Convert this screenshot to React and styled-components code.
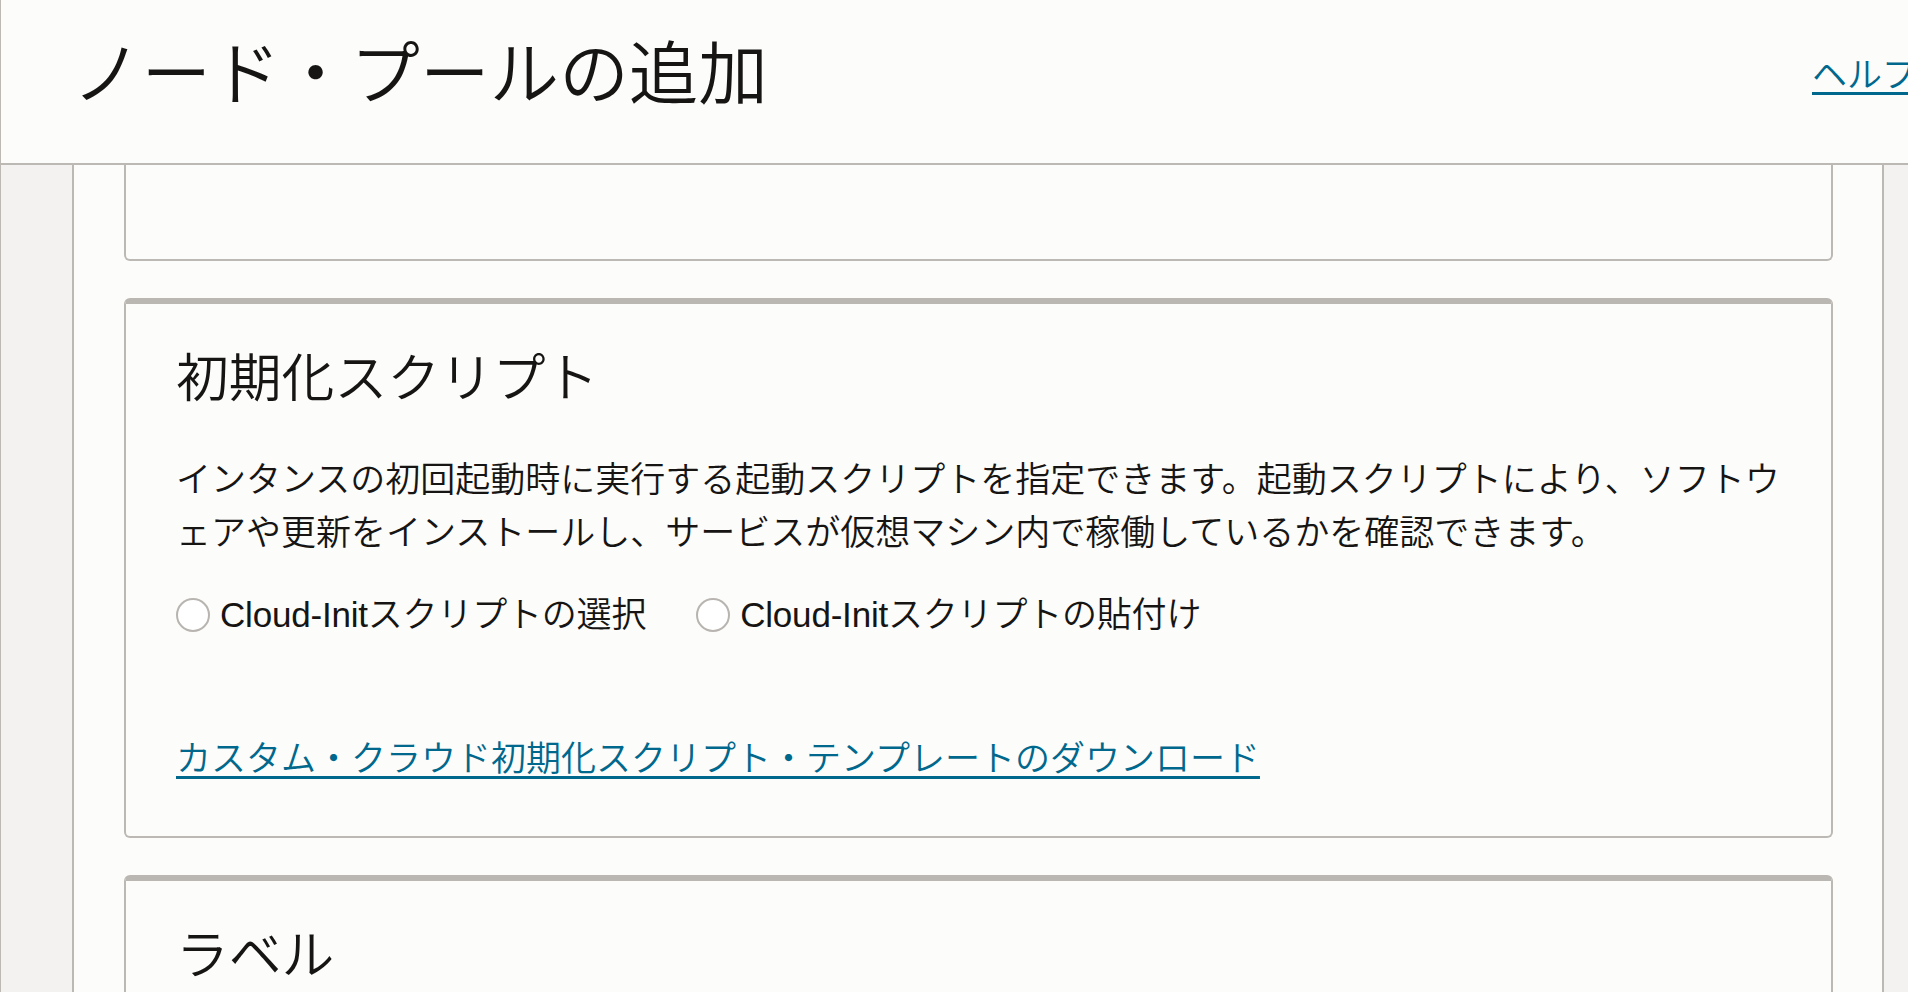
import React from 'react';
import styled, {createGlobalStyle} from 'styled-components';

const FONT = `"Liberation Sans", "Noto Sans CJK JP", sans-serif`;

const GlobalStyle = createGlobalStyle`
    html, body{
        margin: 0;
        padding: 0;
        background: #f3f2f1;
    }
    *{
        box-sizing: border-box;
    }
`;

function Radio({label}) {
    return (
        <RadioOption>
            <RadioCircle />
            <span>{label}</span>
        </RadioOption>
    )
}

function App() {
    return (
        <>
            <GlobalStyle />
            <Page>
                <Header>
                    <PageTitle>ノード・プールの追加</PageTitle>
                    <HelpSlot>
                        <LinkText href="#">ヘルプ</LinkText>
                    </HelpSlot>
                </Header>
                <Body>
                    <Rail />
                    <Main>
                        <Card $clipped />
                        <Card>
                            <CardTitle>初期化スクリプト</CardTitle>
                            <Description>
                                インタンスの初回起動時に実行する起動スクリプトを指定できます。起動スクリプトにより、ソフトウェアや更新をインストールし、サービスが仮想マシン内で稼働しているかを確認できます。
                            </Description>
                            <RadioRow>
                                <Radio label="Cloud-Initスクリプトの選択" />
                                <Radio label="Cloud-Initスクリプトの貼付け" />
                            </RadioRow>
                            <DownloadLine>
                                <LinkText href="#">カスタム・クラウド初期化スクリプト・テンプレートのダウンロード</LinkText>
                            </DownloadLine>
                        </Card>
                        <Card>
                            <CardTitle>ラベル</CardTitle>
                        </Card>
                    </Main>
                    <Rail $right />
                </Body>
            </Page>
        </>
    )
}

const Page = styled.div`
    width: 1908px;
    height: 992px;
    overflow: hidden;
    display: flex;
    flex-direction: column;
    border-left: 1px solid #bcb8b4;
    background: #fcfcfb;
    color: #161513;
    font-family: ${FONT};
    font-weight: 350;
`;

const Header = styled.header`
    height: 165px;
    flex-shrink: 0;
    display: flex;
    align-items: center;
    padding: 0 0 14px 71px;
    border-bottom: 2px solid #bcb8b4;
    background: #fcfcfb;
`;

const PageTitle = styled.h1`
    flex: 1;
    margin: 0;
    font-size: 69.6px;
    line-height: 84px;
    font-weight: 350;
    white-space: nowrap;
`;

const HelpSlot = styled.div`
    width: 96px;
    flex-shrink: 0;
    overflow: hidden;
    white-space: nowrap;
    font-size: 35px;
    line-height: 53px;
`;

const LinkText = styled.a`
    color: #00688c;
    text-decoration: underline;
    text-decoration-thickness: 2.5px;
    text-underline-offset: 5px;
`;

const Body = styled.div`
    flex: 1;
    min-height: 0;
    display: flex;
`;

const Rail = styled.div`
    flex-shrink: 0;
    width: ${p => p.$right ? '26px' : '73px'};
    background: #f3f2f1;
    border-${p => p.$right ? 'left' : 'right'}: 2px solid #bcb8b4;
`;

const Main = styled.main`
    flex: 1;
    min-width: 0;
    display: flex;
    flex-direction: column;
    gap: 37px;
    padding: 0 49px 0 50px;
    overflow: hidden;
`;

const Card = styled.section`
    flex-shrink: 0;
    background: #fcfcfb;
    border: 2px solid #bcb8b4;
    border-top: ${p => p.$clipped ? 'none' : '6px solid #bab6b2'};
    border-radius: ${p => p.$clipped ? '0 0 6px 6px' : '6px'};
    height: ${p => p.$clipped ? '94px' : 'auto'};
    padding: 43px 42px 51px 50px;
`;

const CardTitle = styled.h2`
    margin: 0;
    font-size: 52.8px;
    line-height: 63px;
    font-weight: 350;
`;

const Description = styled.p`
    margin: 43px 0 0;
    font-size: 35px;
    line-height: 53px;
`;

const RadioRow = styled.div`
    margin-top: 29px;
    display: flex;
    align-items: center;
    gap: 50px;
    height: 53px;
`;

const RadioOption = styled.label`
    display: flex;
    align-items: center;
    gap: 10px;
    font-size: 35px;
    line-height: 53px;
    letter-spacing: -0.2px;
    white-space: nowrap;
`;

const RadioCircle = styled.span`
    width: 34px;
    height: 34px;
    flex-shrink: 0;
    border-radius: 50%;
    border: 2px solid #b8b4b0;
    background: #ffffff;
`;

const DownloadLine = styled.div`
    margin-top: 91px;
    font-size: 35px;
    line-height: 53px;
`;

export default App
